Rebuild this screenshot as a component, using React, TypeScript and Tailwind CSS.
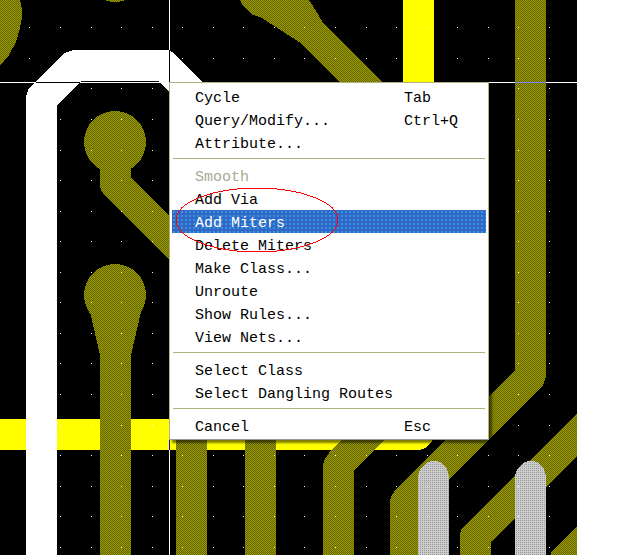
import { clsx } from "clsx";

const range = (n: number) => Array.from({ length: n }, (_, i) => i);

type Item = {
	label: string;
	shortcut?: string;
	disabled?: boolean;
	active?: boolean;
};

const groups: Item[][] = [
	[
		{ label: "Cycle", shortcut: "Tab" },
		{ label: "Query/Modify...", shortcut: "Ctrl+Q" },
		{ label: "Attribute..." },
	],
	[
		{ label: "Smooth", disabled: true },
		{ label: "Add Via" },
		{ label: "Add Miters", active: true },
		{ label: "Delete Miters" },
		{ label: "Make Class..." },
		{ label: "Unroute" },
		{ label: "Show Rules..." },
		{ label: "View Nets..." },
	],
	[{ label: "Select Class" }, { label: "Select Dangling Routes" }],
	[{ label: "Cancel", shortcut: "Esc" }],
];

function Board() {
	return (
		<svg
			className="block"
			width="577"
			height="555"
			viewBox="0 0 577 555"
			shapeRendering="crispEdges"
			aria-hidden="true"
		>
			<defs>
				<pattern id="copper" width="2" height="2" patternUnits="userSpaceOnUse">
					<rect width="2" height="2" fill="#999900" />
					<path d="M0 0h1v1H0zM1 1h1v1H1z" fill="#666600" />
				</pattern>
				<pattern id="pin" width="2" height="2" patternUnits="userSpaceOnUse">
					<rect width="2" height="2" fill="#cccccc" />
					<path d="M0 0h1v1H0z" fill="#999999" />
				</pattern>
			</defs>
			<rect width="577" height="555" fill="#000" />

			{/* yellow net */}
			<path d="M403 0h31v90h-31zM0 419H434V436L431 443L425 448L420 450H0z" fill="#ff0" />

			{/* copper layer */}
			<g fill="url(#copper)">
				<path d="M0 0H20L22 9V18L20 28L16 42L9 55L0 66z" />
				<circle cx="115" cy="-29" r="31" />
				<path d="M240 0L243 6L251 14L262 18L299 42L339 82H382L323 23L318 14L309 0z" />
				<circle cx="115" cy="142" r="31" />
				<path d="M100 160H131V178L175 222V265L105 196L101 190L100 185z" />
				<circle cx="115" cy="295" r="31" />
				<path d="M90 312L100 355V555H131V355L141 312z" />
				<path d="M176 430h31v125h-31zM245 430h31v125h-31z" />
				<path d="M323 555V465L325 459L329 453L351 430H394L354 471V555z" />
				<path d="M515 0H546V377L543 385L421 507V555H390V500L392 495L397 488L515 370z" />
				<path d="M460 555V533L462 528L467 523L577 413V457L491 542V555z" />
				<path d="M551 555V552L577 527V555z" />
			</g>

			{/* routed trace being edited */}
			<path
				d="M26 555V97L28 90L64 53L73 50H169L174 53L210 90H169V92L158 81H81L57 105V555z"
				fill="#fff"
			/>

			<g fill="url(#pin)">
				<path d="M418 555V476L420 469L426 463L431 461H437L442 463L447 469L449 476V555z" />
				<path d="M515 555V476L517 469L523 463L528 461H534L539 463L544 469L546 476V555z" />
			</g>

			{/* snap grid */}
			<g fill="#fff">
				{range(18).map((row) =>
					range(18).map((col) => (
						<rect
							key={`${row}-${col}`}
							x={Math.round(29.4 + col * 30.56)}
							y={Math.round(27.3 + row * 30.56)}
							width="1"
							height="1"
						/>
					))
				)}
			</g>

			{/* crosshair, inverted where it crosses something bright */}
			<path d="M0 82h577v1H0zM169 0h1v555h-1z" fill="#fff" />
			<path d="M36 82h44v1H36zM169 50h1v33h-1z" fill="#000" />
			<path d="M515 82h31v1h-31z" fill="#8080ff" />
			<path d="M169 419h1v31h-1z" fill="#00f" />
		</svg>
	);
}

function MenuRow({ label, shortcut, disabled, active }: Item) {
	return (
		<button
			type="button"
			role="menuitem"
			disabled={disabled}
			className={clsx(
				"flex h-[23px] w-full items-center pt-1 pr-7 pl-[23px] text-left whitespace-pre",
				disabled && "text-[#aaa894]",
				active && "bg-[#3366cc] bg-[radial-gradient(circle,#3399cc_1px,transparent_1px)] bg-[length:4px_4px] text-white"
			)}
		>
			<span className="flex-1">{label}</span>
			{shortcut && <span className="w-[54px]">{shortcut}</span>}
		</button>
	);
}

function ContextMenu() {
	return (
		<div
			role="menu"
			className="absolute top-[82px] left-[169px] w-80 border border-[#b2b280] border-b-[#999999] bg-white p-[2px] font-['Liberation_Mono',monospace] text-[15px] leading-[23px] text-black shadow-[3px_3px_2px_rgba(0,0,0,0.5)]"
		>
			{groups.map((items, i) => (
				<div key={i}>
					{i > 0 && <hr className="mx-px mt-[4px] mb-[5px] border-t border-[#b2b280]" />}
					{items.map((item) => (
						<MenuRow key={item.label} {...item} />
					))}
				</div>
			))}
			<svg
				className="pointer-events-none absolute top-[104px] left-[4px]"
				width="166"
				height="66"
				viewBox="0 0 166 66"
				fill="none"
				aria-hidden="true"
			>
				<ellipse cx="83" cy="33" rx="81" ry="32" stroke="#f00" shapeRendering="crispEdges" />
			</svg>
		</div>
	);
}

export default function App() {
	return (
		<main className="relative min-h-screen overflow-hidden bg-white">
			<Board />
			<ContextMenu />
		</main>
	);
}
